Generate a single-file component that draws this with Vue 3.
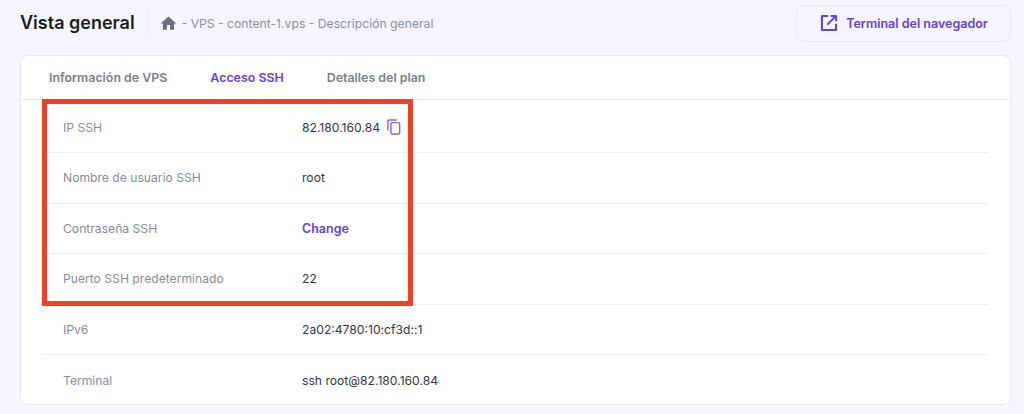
<script setup>
const rows = [
  { label: 'IP SSH', value: '82.180.160.84', copy: true },
  { label: 'Nombre de usuario SSH', value: 'root' },
  { label: 'Contraseña SSH', value: 'Change', link: true },
  { label: 'Puerto SSH predeterminado', value: '22' },
  { label: 'IPv6', value: '2a02:4780:10:cf3d::1' },
  { label: 'Terminal', value: 'ssh root@82.180.160.84' }
]
const tabs = [
  { name: 'Información de VPS' },
  { name: 'Acceso SSH', active: true },
  { name: 'Detalles del plan' }
]
</script>

<template>
  <div class="page">
    <header class="top">
      <h1 class="title">Vista general</h1>
      <div class="crumbs">
        <svg class="home" viewBox="0 0 24 24" width="19" height="19"><path fill="#6d6d80" d="M10 20v-6h4v6h5v-8h3L12 3 2 12h3v8z"/></svg>
        <span>- VPS - content-1.vps - Descripción general</span>
      </div>
      <button class="term">
        <svg viewBox="0 0 24 24" width="20" height="20" fill="none" stroke="#673de6" stroke-width="2.4" stroke-linejoin="round"><path d="M11 3.500H3.500v17h17V13"/><path d="M14 3.500h6.500V10M20.500 3.500 10 14"/></svg>
        <span>Terminal del navegador</span>
      </button>
    </header>
    <section class="card">
      <nav class="tabs">
        <span v-for="t in tabs" :key="t.name" class="tab" :class="{ active: t.active }">{{ t.name }}</span>
      </nav>
      <div class="table">
        <div v-for="r in rows" :key="r.label" class="row">
          <span class="label">{{ r.label }}</span>
          <span class="value" :class="{ link: r.link }">{{ r.value }}</span>
          <svg v-if="r.copy" class="copy" viewBox="0 0 16 18" width="14" height="16" fill="none" stroke="#7f5fec" stroke-width="1.6"><path d="M1 13V2.500A1.500 1.500 0 0 1 2.500 1H11"/><rect x="4.500" y="4" width="10" height="13" rx="1.500"/></svg>
        </div>
      </div>
      <div class="mark"></div>
    </section>
  </div>
</template>

<style>
html, body { margin: 0; background: #f4f5ff; }
</style>

<style scoped>
.page {
  width: 1024px;
  height: 414px;
  box-sizing: border-box;
  padding: 4px 13px 0 20px;
  background: #f4f5ff;
  font-family: Inter, "Liberation Sans", sans-serif;
  overflow: hidden;
}
.top {
  display: flex;
  align-items: center;
  height: 38px;
  margin-bottom: 13px;
}
.title {
  margin: 0;
  padding-right: 12px;
  font-size: 18px;
  font-weight: 600;
  color: #1d1e20;
  line-height: 28px;
  border-right: 1px solid #e8e9f3;
}
.crumbs {
  display: flex;
  align-items: center;
  gap: 4px;
  margin-left: 11px;
  font-size: 12.200px;
  color: #8f90a6;
}
.term {
  display: flex;
  align-items: center;
  justify-content: center;
  gap: 7px;
  margin-left: auto;
  width: 215px;
  height: 37px;
  padding: 0;
  background: #f4f5ff;
  border: 1px solid #e8e9f3;
  border-radius: 8px;
  font: 600 12.500px Inter, "Liberation Sans", sans-serif;
  color: #673de6;
}
.card {
  position: relative;
  width: 991px;
  height: 350px;
  box-sizing: border-box;
  background: #fff;
  border: 1px solid #e8e9f3;
  border-radius: 8px;
}
.tabs {
  display: flex;
  gap: 43px;
  height: 44px;
  box-sizing: border-box;
  align-items: center;
  padding-left: 28px;
  border-bottom: 1px solid #e8e9f3;
}
.tab {
  font-size: 12.400px;
  font-weight: 600;
  color: #7d7e90;
}
.tab.active { color: #673de6; }
.table { padding: 2.500px 22px 0 21px; }
.row {
  display: flex;
  align-items: center;
  height: 50.500px;
  box-sizing: border-box;
  border-bottom: 1px solid #eeeef4;
  font-size: 12.150px;
}
.row:last-child { border-bottom: 0; }
.label { width: 260px; padding-left: 21px; box-sizing: border-box; color: #8a8b9e; flex: none; }
.value { color: #36344d; }
.value.link { color: #673de6; font-weight: 600; font-size: 12.500px; }
.copy { margin-left: 7px; }
.mark {
  position: absolute;
  left: 21px;
  top: 43px;
  width: 371px;
  height: 207px;
  box-sizing: border-box;
  border: 5px solid #ef4123;
}
</style>
